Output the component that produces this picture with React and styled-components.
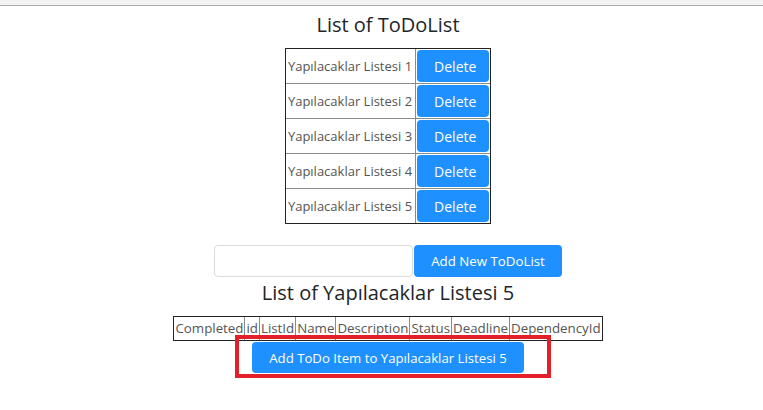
import styled, { createGlobalStyle } from "styled-components";

const GlobalStyle = createGlobalStyle`
  body {
    margin: 0;
    background: #fff;
    font-family: "Open Sans", "Noto Sans", sans-serif;
    color: #212529;
  }
`;

const TopBar = styled.div`
  height: 5px;
  background: #f3f3f3;
  border-bottom: 1px solid #aaaaaa;
`;

const Page = styled.div`
  display: flex;
  flex-direction: column;
  align-items: center;
  padding: 0 0 30px 13px;
  min-height: 380px;
`;

const Title = styled.h4`
  margin: ${(p) => p.$top}px 0 ${(p) => p.$bottom}px;
  font-size: 20px;
  font-weight: 500;
  line-height: 26px;
  color: #212529;
`;

const Table = styled.table`
  border-collapse: separate;
  border-spacing: 0;
  border: 1px solid #222;
  font-size: ${(p) => p.$size || 13}px;
  color: #555;
  td,
  th {
    font-weight: 400;
    border-right: 1px solid #8a8a8a;
    border-bottom: 1px solid #8a8a8a;
    white-space: nowrap;
  }
  td:last-child,
  th:last-child {
    border-right: none;
  }
  tr:last-child td,
  tr:last-child th {
    border-bottom: none;
  }
`;

const NameCell = styled.td`
  padding: 0 3px 0 2px;
  height: 34px;
`;

const ButtonCell = styled.td`
  padding: 1px;
`;

const HeadCell = styled.th`
  padding: 0 1px;
  height: 23px;
  line-height: 23px;
`;

const Button = styled.button`
  display: block;
  border: none;
  border-radius: 4px;
  background: #1e90ff;
  color: #fff;
  font-family: inherit;
  font-size: ${(p) => p.$size || 14}px;
  height: ${(p) => p.$height || 32}px;
  width: ${(p) => (p.$width ? `${p.$width}px` : "auto")};
  padding: 0 17px;
  cursor: pointer;
`;

const AddRow = styled.div`
  display: flex;
  gap: 1px;
  margin-top: 21px;
`;

const Input = styled.input`
  width: 199px;
  height: 32px;
  box-sizing: border-box;
  border: 1px solid #dcdcdc;
  border-radius: 4px;
  padding: 0 8px;
`;

const Highlight = styled.div`
  position: relative;
  margin-top: 1px;
  &::after {
    content: "";
    position: absolute;
    left: -17px;
    right: -27px;
    top: -7px;
    bottom: -5px;
    border: 4px solid #e3202a;
    pointer-events: none;
  }
`;

const lists = [1, 2, 3, 4, 5].map((n) => `Yapılacaklar Listesi ${n}`);
const columns = [
  "Completed",
  "id",
  "ListId",
  "Name",
  "Description",
  "Status",
  "Deadline",
  "DependencyId",
];

export default function App() {
  return (
    <>
      <GlobalStyle />
      <TopBar />
      <Page>
        <Title $top={6} $bottom={10}>List of ToDoList</Title>
        <Table>
          <tbody>
            {lists.map((name) => (
              <tr key={name}>
                <NameCell>{name}</NameCell>
                <ButtonCell>
                  <Button $width={72} $size={14}>Delete</Button>
                </ButtonCell>
              </tr>
            ))}
          </tbody>
        </Table>
        <AddRow>
          <Input />
          <Button $size={13.3}>Add New ToDoList</Button>
        </AddRow>
        <Title $top={3} $bottom={10}>List of Yapılacaklar Listesi 5</Title>
        <Table $size={13.3}>
          <thead>
            <tr>
              {columns.map((c) => (
                <HeadCell key={c}>{c}</HeadCell>
              ))}
            </tr>
          </thead>
        </Table>
        <Highlight>
          <Button $size={13.2} $height={31}>
            Add ToDo Item to Yapılacaklar Listesi 5
          </Button>
        </Highlight>
      </Page>
    </>
  );
}
